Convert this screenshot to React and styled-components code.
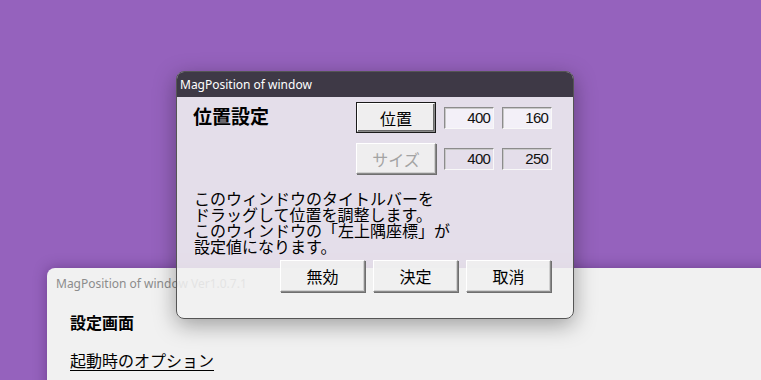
import styled, { createGlobalStyle } from 'styled-components'

const GlobalStyle = createGlobalStyle`
  html, body {
    margin: 0;
    padding: 0;
  }
  body {
    font-family: "Noto Sans CJK JP", "Noto Sans", sans-serif;
  }
`

const Desktop = styled.div`
  position: relative;
  width: 761px;
  height: 380px;
  overflow: hidden;
  background: #9562bd;
`

const MainWindow = styled.div`
  position: absolute;
  left: 47px;
  top: 268px;
  width: 760px;
  height: 200px;
  background: #f1f1f1;
  border-radius: 8px 0 0 0;
  box-shadow: 0 0 14px rgba(40, 0, 60, 0.35);
  padding: 8px 0 0 9px;
  box-sizing: border-box;
  display: flex;
  flex-direction: column;
`

const MainTitle = styled.div`
  font-family: "Noto Sans", "Liberation Sans", sans-serif;
  font-size: 12px;
  line-height: 16px;
  color: #8c8c8c;
`

const MainBody = styled.div`
  display: flex;
  flex-direction: column;
  gap: 18px;
  padding: 20px 0 0 14px;
`

const MainHeading = styled.div`
  font-size: 16px;
  font-weight: 700;
  line-height: 20px;
  color: #000;
`

const OptionLink = styled.div`
  font-size: 16px;
  line-height: 20px;
  color: #000;
  text-decoration: underline;
  text-underline-offset: 3px;
`

const Dialog = styled.div`
  position: absolute;
  left: 176px;
  top: 71px;
  width: 398px;
  height: 248px;
  box-sizing: border-box;
  border: 1px solid #555;
  border-radius: 8px;
  overflow: hidden;
  background: rgba(240, 240, 240, 0.87);
  box-shadow: 0 6px 22px rgba(0, 0, 0, 0.35);
  display: flex;
  flex-direction: column;
`

const TitleBar = styled.div`
  height: 25px;
  background: #3e3946;
  color: #fff;
  font-family: "Noto Sans", "Liberation Sans", sans-serif;
  font-size: 12px;
  line-height: 26px;
  padding-left: 3px;
  flex-shrink: 0;
`

const Body = styled.div`
  padding: 5px 22px 0 16px;
  display: flex;
  flex-direction: column;
`

const ControlGrid = styled.div`
  display: grid;
  grid-template-columns: 155px 80px 50px 50px;
  grid-auto-rows: 31px;
  column-gap: 8px;
  row-gap: 10px;
  align-items: center;
`

const SectionTitle = styled.div`
  font-size: 19px;
  font-weight: 700;
  line-height: 24px;
  color: #000;
  margin-top: -3px;
`

const ClassicButton = styled.button`
  box-sizing: border-box;
  height: ${({ $h }) => $h || 31}px;
  width: ${({ $w }) => $w || 80}px;
  margin: 0;
  padding: 0;
  font-family: "Noto Sans CJK JP", sans-serif;
  font-size: 16px;
  line-height: 1;
  color: ${({ disabled }) => (disabled ? '#a3a3a3' : '#000')};
  background: rgba(240, 240, 240, 0.9);
  border: 1px solid;
  border-color: #fff #8a8a8a #8a8a8a #fff;
  box-shadow: ${({ $default }) =>
    $default
      ? '0 0 0 1px #1a1a1a, inset -1px -1px 0 #6a6a6a'
      : 'inset -1px -1px 0 #d0d0d0, 1px 1px 0 #6f6f6f'};
  ${({ $default }) => $default && 'margin: 1px; height: 29px; width: 78px;'}
`

const NumberBox = styled.div`
  box-sizing: border-box;
  height: 22px;
  width: 50px;
  border: 1px solid;
  border-color: #8c8c8c #f8f8f8 #f8f8f8 #8c8c8c;
  box-shadow: inset 1px 1px 0 #c8c8c8;
  background: ${({ $active }) => ($active ? '#f3f0f8' : 'transparent')};
  font-family: "Liberation Sans", Arial, sans-serif;
  font-size: 15px;
  line-height: 20px;
  text-align: right;
  padding-right: 3px;
  color: #111;
  letter-spacing: -0.8px;
`

const Description = styled.p`
  margin: 16px 0 0 1px;
  font-size: 16px;
  line-height: 16px;
  color: #000;
  white-space: pre-line;
`

const ButtonRow = styled.div`
  display: flex;
  justify-content: flex-end;
  gap: 8px;
  margin-top: 6px;
`

export default function App() {
  return (
    <>
      <GlobalStyle />
      <Desktop>
        <MainWindow>
          <MainTitle>MagPosition of window Ver1.0.7.1</MainTitle>
          <MainBody>
            <MainHeading>設定画面</MainHeading>
            <OptionLink>起動時のオプション</OptionLink>
          </MainBody>
        </MainWindow>

        <Dialog>
          <TitleBar>MagPosition of window</TitleBar>
          <Body>
            <ControlGrid>
              <SectionTitle>位置設定</SectionTitle>
              <ClassicButton $default>位置</ClassicButton>
              <NumberBox $active>400</NumberBox>
              <NumberBox $active>160</NumberBox>
              <span />
              <ClassicButton disabled>サイズ</ClassicButton>
              <NumberBox>400</NumberBox>
              <NumberBox>250</NumberBox>
            </ControlGrid>
            <Description>
              {'このウィンドウのタイトルバーを\nドラッグして位置を調整します。\nこのウィンドウの「左上隅座標」が\n設定値になります。'}
            </Description>
            <ButtonRow>
              <ClassicButton $w={85} $h={32}>無効</ClassicButton>
              <ClassicButton $w={85} $h={32}>決定</ClassicButton>
              <ClassicButton $w={85} $h={32}>取消</ClassicButton>
            </ButtonRow>
          </Body>
        </Dialog>
      </Desktop>
    </>
  )
}
